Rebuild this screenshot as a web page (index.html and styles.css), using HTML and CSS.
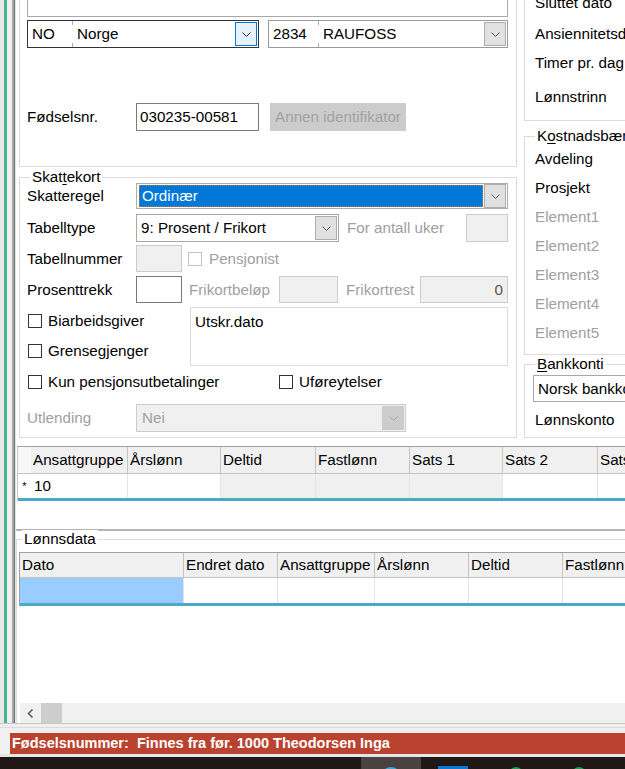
FILE: index.html
```html
<!DOCTYPE html>
<html lang="no">
<head>
<meta charset="utf-8">
<title>Ansatt</title>
<link rel="stylesheet" href="styles.css">
</head>
<body>
<div class="screen">
  <div class="window">
    <div class="edge"></div>
    <div class="main">
      <div class="top">
        <div class="leftcol">
          <div class="group upper">
            <div class="topbox"></div>
            <div class="row addr">
              <div class="combo combo-country">
                <span class="cell c-code">NO</span><span class="sep"></span><span class="cell">Norge</span>
                <span class="dd hot"><svg width="9" height="5" viewBox="0 0 9 5"><path d="M0.5 0.5L4.5 4.5L8.5 0.5" fill="none" stroke="#333"/></svg></span>
              </div>
              <div class="combo combo-post">
                <span class="cell c-zip">2834</span><span class="sep"></span><span class="cell">RAUFOSS</span>
                <span class="dd"><svg width="9" height="5" viewBox="0 0 9 5"><path d="M0.5 0.5L4.5 4.5L8.5 0.5" fill="none" stroke="#555"/></svg></span>
              </div>
            </div>
            <div class="row fnr">
              <span class="lbl">Fødselsnr.</span>
              <div class="input w-fnr">030235-00581</div>
              <div class="btn-dis">Annen identifikator</div>
            </div>
          </div>

          <div class="group skatt">
            <span class="legend">Skat<u>t</u>ekort</span>
            <div class="row r-regel">
              <span class="lbl">Skatteregel</span>
              <div class="combo combo-regel">
                <span class="sel">Ordinær</span>
                <span class="dd"><svg width="9" height="5" viewBox="0 0 9 5"><path d="M0.5 0.5L4.5 4.5L8.5 0.5" fill="none" stroke="#555"/></svg></span>
              </div>
            </div>
            <div class="row r-type">
              <span class="lbl">Tabelltype</span>
              <div class="combo combo-type">
                <span class="cell">9: Prosent / Frikort</span>
                <span class="dd"><svg width="9" height="5" viewBox="0 0 9 5"><path d="M0.5 0.5L4.5 4.5L8.5 0.5" fill="none" stroke="#555"/></svg></span>
              </div>
              <span class="dis-text l-uker">For antall uker</span>
              <div class="input dis w-uker"></div>
            </div>
            <div class="row r-nr">
              <span class="lbl">Tabellnummer</span>
              <div class="input dis w-small"></div>
              <span class="chk chk-dis"></span><span class="dis-text">Pensjonist</span>
            </div>
            <div class="row r-pst">
              <span class="lbl">Prosenttrekk</span>
              <div class="input w-small"></div>
              <span class="dis-text l-frik">Frikortbeløp</span>
              <div class="input dis w-frik"></div>
              <span class="dis-text l-rest">Frikortrest</span>
              <div class="input dis w-rest">0</div>
            </div>
            <div class="row r-block">
              <div class="chkcol">
                <div class="chkrow"><span class="chk"></span>Biarbeidsgiver</div>
                <div class="chkrow"><span class="chk"></span>Grensegjenger</div>
              </div>
              <div class="utskr">Utskr.dato</div>
            </div>
            <div class="row r-kun">
              <div class="chkrow kun"><span class="chk"></span>Kun pensjonsutbetalinger</div>
              <div class="chkrow"><span class="chk"></span>Uføreytelser</div>
            </div>
            <div class="row r-utl">
              <span class="lbl dis-text">Utlending</span>
              <div class="combo combo-utl">
                <span class="cell">Nei</span>
                <span class="dd"><svg width="9" height="5" viewBox="0 0 9 5"><path d="M0.5 0.5L4.5 4.5L8.5 0.5" fill="none" stroke="#a8a8a8"/></svg></span>
              </div>
            </div>
          </div>
        </div>

        <div class="rightcol">
          <div class="group r1">
            <div class="rlbl first">Sluttet dato</div>
            <div class="rlbl second">Ansiennitetsdato</div>
            <div class="rlbl third">Timer pr. dag</div>
            <div class="rlbl fourth">Lønnstrinn</div>
          </div>
          <div class="group r2">
            <span class="legend">K<u>o</u>stnadsbærer</span>
            <div class="krow">Avdeling</div>
            <div class="krow">Prosjekt</div>
            <div class="krow dis-text">Element1</div>
            <div class="krow dis-text">Element2</div>
            <div class="krow dis-text">Element3</div>
            <div class="krow dis-text">Element4</div>
            <div class="krow dis-text">Element5</div>
          </div>
          <div class="group r3">
            <span class="legend"><u>B</u>ankkonti</span>
            <div class="combo combo-bank"><span class="cell">Norsk bankkonto</span></div>
            <div class="rlbl konto">Lønnskonto</div>
          </div>
        </div>
      </div>

      <div class="dg dg1">
        <div class="dg-head">
          <span class="hc rh"></span>
          <span class="hc">Ansattgruppe</span>
          <span class="hc">Årslønn</span>
          <span class="hc">Deltid</span>
          <span class="hc">Fastlønn</span>
          <span class="hc">Sats 1</span>
          <span class="hc">Sats 2</span>
          <span class="hc">Sats 3</span>
        </div>
        <div class="dg-row">
          <span class="dc rh star">*</span>
          <span class="dc">10</span>
          <span class="dc"></span>
          <span class="dc ro"></span>
          <span class="dc ro"></span>
          <span class="dc ro"></span>
          <span class="dc"></span>
          <span class="dc"></span>
        </div>
      </div>

      <div class="gap-area"></div>

      <div class="lonn">
        <div class="lgroup">
          <span class="legend">Lønnsdata</span>
          <div class="dg dg2">
            <div class="dg-head">
              <span class="hc">Dato</span>
              <span class="hc">Endret dato</span>
              <span class="hc">Ansattgruppe</span>
              <span class="hc">Årslønn</span>
              <span class="hc">Deltid</span>
              <span class="hc">Fastlønn</span>
            </div>
            <div class="dg-row">
              <span class="dc cur"></span>
              <span class="dc"></span>
              <span class="dc"></span>
              <span class="dc"></span>
              <span class="dc"></span>
              <span class="dc"></span>
            </div>
          </div>
          <div class="hscroll">
            <span class="arrow"><svg width="7" height="9" viewBox="0 0 7 9"><path d="M5.5 0.5L1.5 4.5L5.5 8.5" fill="none" stroke="#606060" stroke-width="1.6"/></svg></span>
            <span class="thumb"></span>
          </div>
        </div>
      </div>
    </div>
  </div>
  <div class="strip"></div>
  <div class="status">Fødselsnummer:&nbsp; Finnes fra før. 1000 Theodorsen Inga</div>
  <div class="sep-line"></div>
  <div class="taskbar">
    <span class="tb-active"><span class="tb-edge"></span></span>
    <span class="tb-blue"></span>
    <span class="tb-green g1"></span>
    <span class="tb-green g2"></span>
  </div>
</div>
</body>
</html>
```

FILE: styles.css
```css
* { box-sizing: border-box; margin: 0; padding: 0; }
html, body { width: 625px; height: 769px; overflow: hidden; }
body {
  font-family: "Liberation Sans", Arial, sans-serif;
  font-size: 15.2px;
  line-height: 18px;
  color: #000;
  background: #f0f0f0;
}
u { text-decoration-thickness: 1px; text-underline-offset: 2px; }

.screen { display: flex; flex-direction: column; width: 625px; height: 769px; }
.window { display: flex; height: 723px; flex: none; }
.edge {
  width: 16px; flex: none;
  background: linear-gradient(to right, #e9e9e9 0 4px, #46b48f 4px 7px, #f0f0f0 7px 12px, #a3a3a3 12px 14px, #777 14px 15px, #e3e3e3 15px 16px);
}
.main { flex: 1; background: #fff; overflow: hidden; display: flex; flex-direction: column; }

/* top area */
.top { display: flex; padding-left: 3px; gap: 7px; height: 438px; flex: none; }
.leftcol { width: 498px; flex: none; display: flex; flex-direction: column; }
.rightcol { width: 220px; flex: none; display: flex; flex-direction: column; }

.group { border: 1px solid #dcdcdc; position: relative; flex: none; }
.legend {
  position: absolute; top: -10px; left: 10px;
  background: #fff; padding: 0 2px; line-height: 18px; white-space: nowrap;
}

.row { display: flex; align-items: center; flex: none; }
.lbl { width: 109px; flex: none; }
.dis-text { color: #a0a0a0; }

/* upper group */
.upper { border-top: none; height: 167px; padding-left: 7px; }
.topbox { width: 481px; height: 17px; border: 1px solid #a8a8a8; border-top: none; background: #fff; }
.addr { margin-top: 3px; height: 28px; gap: 9px; }
.fnr { margin-top: 55px; height: 28px; }

.combo {
  display: flex; align-items: center; height: 28px;
  border: 1px solid #a0a0a0; background: #fff; flex: none; position: relative;
}
.combo .cell { padding-left: 4px; white-space: nowrap; overflow: hidden; }
.combo .sep {
  width: 1px; height: 100%; flex: none;
  background: linear-gradient(to bottom, #b0b0b0 0 4px, transparent 4px calc(100% - 4px), #b0b0b0 calc(100% - 4px));
}
.combo .dd {
  margin-left: auto; width: 22px; height: calc(100% - 2px); margin-right: 1px; flex: none;
  display: flex; align-items: center; justify-content: center;
  background: #e1e1e1; border: 1px solid #adadad;
}
.combo .dd.hot { background: #e5f1fb; border-color: #0078d7; }

.combo-country { width: 232px; border-color: #333; }
.c-code { width: 44px; flex: none; }
.combo-post { width: 240px; border-color: #9a9a9a; }
.c-zip { width: 49px; flex: none; }

.input {
  height: 28px; border: 1px solid #7a7a7a; background: #fff; flex: none;
  padding-left: 3px; display: flex; align-items: center; white-space: nowrap;
}
.input.dis { background: #f0f0f0; border-color: #cccccc; }
.w-fnr { width: 123px; }
.btn-dis {
  margin-left: 11px; width: 136px; height: 28px; flex: none;
  background: #cccccc; color: #a3a3a3;
  display: flex; align-items: center; justify-content: center; white-space: nowrap;
}

/* skattekort */
.skatt { margin-top: 10px; height: 261px; padding: 0 7px; }
.r-regel { margin-top: 5px; height: 26px; }
.combo-regel { width: 372px; height: 26px; border-color: #adadad; }
.combo-regel .sel {
  flex: 1; align-self: stretch; margin: 1px 1px 1px 2px;
  background: #0078d7; color: #fff; padding-left: 3px;
  outline: 1px dotted #c8762e; outline-offset: -1px;
  display: flex; align-items: center;
}
.combo-regel .dd { margin-left: 0; height: 24px; }

.r-type { margin-top: 5px; height: 28px; }
.combo-type { width: 203px; border-color: #a8a8a8; }
.l-uker { width: 119px; margin-left: 8px; flex: none; }
.w-uker { width: 42px; }

.r-nr { margin-top: 3px; height: 27px; }
.w-small { width: 46px; height: 27px; }
.chk { width: 14px; height: 14px; border: 1px solid #333; background: #fff; flex: none; display: inline-block; }
.chk-dis { border-color: #c4c4c4; margin-left: 6px; margin-right: 7px; }

.r-pst { margin-top: 4px; height: 27px; }
.l-frik { width: 90px; margin-left: 7px; flex: none; }
.w-frik { width: 59px; height: 27px; }
.l-rest { width: 74px; margin-left: 8px; flex: none; }
.w-rest { width: 88px; height: 27px; justify-content: flex-end; padding-right: 4px; color: #555; }

.r-block { margin-top: 4px; height: 59px; align-items: flex-start; }
.chkcol { width: 163px; flex: none; padding-top: 5px; display: flex; flex-direction: column; gap: 12px; }
.chkrow { display: flex; align-items: center; gap: 6px; margin-left: 1px; height: 18px; white-space: nowrap; }
.utskr { width: 318px; height: 59px; border: 1px solid #dcdcdc; padding: 5px 0 0 4px; flex: none; }

.r-kun { margin-top: 7px; height: 18px; }
.kun { width: 250px; flex: none; }

.r-utl { margin-top: 13px; height: 28px; }
.combo-utl { width: 270px; background: #f0f0f0; border-color: #cccccc; color: #a0a0a0; }
.combo-utl .cell { padding-left: 5px; }
.combo-utl .dd { background: #cccccc; border-color: #cccccc; }

/* right column */
.r1 { border-top: none; border-right: none; height: 121px; padding-left: 10px; }
.rlbl { line-height: 18px; height: 18px; white-space: nowrap; }
.r1 .first { margin-top: -6px; }
.r1 .second { margin-top: 13px; }
.r1 .third { margin-top: 11px; }
.r1 .fourth { margin-top: 16px; }

.r2 { margin-top: 15px; height: 219px; border-right: none; padding: 7px 0 0 10px; }
.krow { height: 29px; line-height: 29px; white-space: nowrap; }

.r3 { margin-top: 9px; height: 74px; border-right: none; padding: 10px 0 0 10px; }
.combo-bank { width: 220px; height: 27px; margin-left: -2px; border-color: #a8a8a8; }
.combo-bank .cell { padding-left: 4px; }
.r3 .konto { margin-top: 9px; }

/* data grids */
.dg { flex: none; background: #fff; }
.dg-head, .dg-row { display: grid; }
.dg1 { margin-top: 8px; margin-left: 1px; border-top: 1px solid #a0a0a0; border-left: 1px solid #c8c8c8; }
.dg1 .dg-head, .dg1 .dg-row { grid-template-columns: 13px 97px 93px 95px 94px 93px 95px 95px; }
.dg1 .dg-head { height: 27px; }
.dg1 .dg-row { height: 27px; border-bottom: 3px solid #4aa9c6; }
.dg2 { margin-left: 1px; border-top: 1px solid #a0a0a0; border-left: 1px solid #a0a0a0; }
.dg2 .dg-head, .dg2 .dg-row { grid-template-columns: 164px 94px 97px 94px 94px 94px; }
.dg2 .dg-head { height: 25px; }
.dg2 .dg-row { height: 28px; border-bottom: 3px solid #4aa9c6; }

.hc {
  background: #f0f0f0; border-right: 1px solid #c4c4c4; border-bottom: 1px solid #c4c4c4;
  padding-left: 2px; display: flex; align-items: center; white-space: nowrap; overflow: hidden;
}
.hc.rh { background: #f7f7f7; border-right: none; }
.dc {
  border-right: 1px solid #e4e4e4; padding-left: 3px;
  display: flex; align-items: center; white-space: nowrap;
}
.dc.rh { border-right: none; }
.dc.ro { background: #f0f0f0; }
.dc.cur { background: #99ccff; }
.star { font-size: 11px; justify-content: center; padding-left: 0; }

.gap-area { height: 30px; flex: none; border-bottom: 2px solid #b4b4b4; }

.lonn { flex: 1; display: flex; flex-direction: column; padding-top: 8px; }
.lgroup {
  flex: 1; position: relative; border-top: 1px solid #dcdcdc; border-left: 1px solid #dcdcdc;
  padding: 12px 0 0 1px; display: flex; flex-direction: column;
}
.lgroup .legend { left: 5px; }
.hscroll {
  margin-top: auto; margin-left: 2px; height: 20px; flex: none;
  background: #f0f0f0; display: flex; align-items: center;
}
.hscroll .arrow { width: 20px; display: flex; justify-content: center; }
.hscroll .thumb { width: 21px; height: 20px; background: #cdcdcd; margin-left: 1px; }

/* bottom */
.strip {
  height: 10px; flex: none;
  background: linear-gradient(to bottom, #c8c8c8 0 1px, #f0f0f0 1px 4px, #dcdcdc 4px 5px, #f0f0f0 5px);
}
.status {
  height: 21px; flex: none; margin-left: 10px;
  background: #b9432f; color: #fff; font-weight: bold; font-size: 14.5px;
  line-height: 21px; padding-left: 2px; white-space: nowrap; overflow: hidden;
}
.sep-line { height: 3px; flex: none; background: #e6e6e6; }
.taskbar { height: 12px; flex: none; background: #1f1816; display: flex; overflow: hidden; }
.tb-active { margin-left: 361px; width: 60px; height: 12px; background: #4a4240; flex: none; display: flex; }
.tb-edge { margin: 10px 0 0 20px; width: 20px; height: 20px; border-radius: 50%; background: #35a9d6; }
.tb-blue { margin: 9px 0 0 17px; width: 30px; height: 3px; background: #0a78d4; flex: none; }
.tb-green { margin-top: 10px; width: 14px; height: 14px; border-radius: 50%; background: #1c9c50; flex: none; }
.tb-green.g1 { margin-left: 41px; }
.tb-green.g2 { margin-left: 49px; }
```
